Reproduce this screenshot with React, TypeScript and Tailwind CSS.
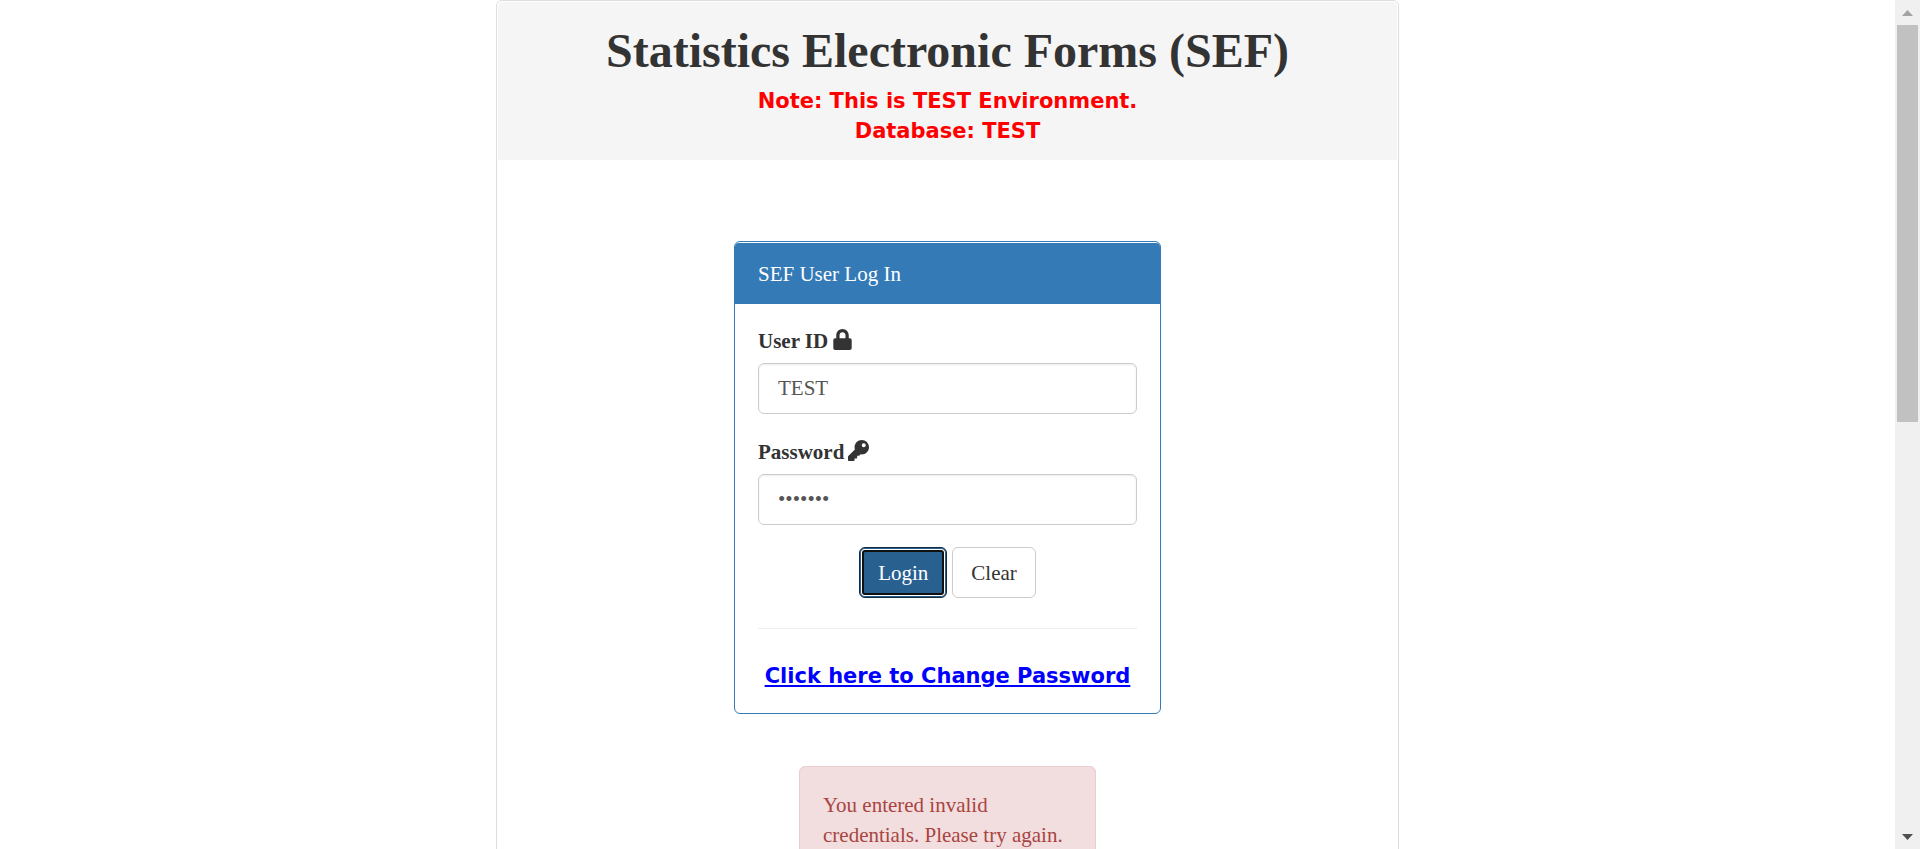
import { useState } from "react";
import { FaKey, FaLock } from "react-icons/fa";

const labelClass = "mb-[7px] flex items-center gap-1 font-bold";

const inputClass =
  "block h-[51px] w-full rounded-[6px] border border-[#cccccc] bg-white px-[19px] py-2 text-[21px] leading-[30px] text-[#555555] shadow-[inset_0_1px_2px_rgba(0,0,0,0.08)] outline-none";

function Header() {
  return (
    <header className="rounded-t-[5px] bg-[#f5f5f5] px-6 pt-[22px] pb-[14px] text-center">
      <h1 className="text-[48px] leading-[54px] font-bold text-[#333333]">
        Statistics Electronic Forms (SEF)
      </h1>
      <p className="mt-2 font-['Verdana','DejaVu_Sans',sans-serif] text-[21px] leading-[30px] font-bold text-[#ff0000]">
        Note: This is TEST Environment.
        <br />
        Database: TEST
      </p>
    </header>
  );
}

function LoginPanel() {
  const [userId, setUserId] = useState("TEST");
  const [password, setPassword] = useState("testing");

  const clear = () => {
    setUserId("");
    setPassword("");
  };

  return (
    <section className="mx-auto w-full max-w-[427px] rounded-[6px] border border-[#337ab7] bg-white pt-px">
      <h2 className="rounded-t-[4px] bg-[#337ab7] px-[23px] pt-4 pb-[15px] text-[21px] leading-[30px] text-white">
        SEF User Log In
      </h2>
      <form className="px-[23px] pt-[22px] pb-[22px]" onSubmit={(e) => e.preventDefault()}>
        <label htmlFor="user-id" className={labelClass}>
          User ID <FaLock className="mb-1 h-[21px] w-auto" aria-hidden="true" />
        </label>
        <input
          id="user-id"
          type="text"
          className={inputClass}
          value={userId}
          onChange={(e) => setUserId(e.target.value)}
        />
        <div className="mt-[23px]">
          <label htmlFor="password" className={labelClass}>
            Password <FaKey className="mb-1 h-[21px] w-auto" aria-hidden="true" />
          </label>
          <input
            id="password"
            type="password"
            className={inputClass}
            value={password}
            onChange={(e) => setPassword(e.target.value)}
          />
        </div>
        <div className="mt-[22px] flex justify-center gap-[5px]">
          <button
            type="submit"
            className="h-[51px] rounded-[6px] border border-[#122b40] bg-[#286090] px-[18px] leading-[30px] text-white shadow-[inset_0_0_0_1px_#286090,inset_0_0_0_2px_#ffffff,inset_0_0_0_4px_#101010]"
          >
            Login
          </button>
          <button
            type="button"
            onClick={clear}
            className="h-[51px] rounded-[6px] border border-[#cccccc] bg-white px-[18px] leading-[30px] text-[#333333]"
          >
            Clear
          </button>
        </div>
        <hr className="mt-[30px] mb-8 border-t border-[#eeeeee]" />
        <p className="text-center font-['Verdana','DejaVu_Sans',sans-serif] leading-[30px] font-bold whitespace-nowrap">
          <a href="#change-password" className="text-[#0000ff] underline">
            Click here to Change Password
          </a>
        </p>
      </form>
    </section>
  );
}

function ErrorMessage() {
  return (
    <section className="mx-auto mt-[30px] w-full max-w-[341px] rounded-[6px] border border-transparent bg-white p-[21px] shadow-[0_1px_1px_rgba(0,0,0,0.05)]">
      <div role="alert" className="rounded-[6px] border border-[#ebccd1] bg-[#f2dede] p-[23px] text-[#a94442]">
        You entered invalid credentials. Please try again.
      </div>
    </section>
  );
}

function ScrollTrack() {
  return (
    <div aria-hidden="true" className="flex w-[25px] shrink-0 flex-col items-center bg-[#f0f0f0]">
      <div className="flex h-[25px] items-center">
        <svg width="11" height="6" viewBox="0 0 11 6" fill="#a3a3a3">
          <path d="M5.5 0 11 6H0Z" />
        </svg>
      </div>
      <div className="h-[397px] w-[21px] bg-[#c1c1c1]" />
      <div className="mt-auto flex h-[25px] items-center">
        <svg width="11" height="6" viewBox="0 0 11 6" fill="#505050">
          <path d="M0 0H11L5.5 6Z" />
        </svg>
      </div>
    </div>
  );
}

export default function App() {
  return (
    <div className="flex h-screen overflow-hidden bg-white font-['Liberation_Serif','Times_New_Roman',serif] text-[21px] leading-[30px] text-[#333333]">
      <div className="min-w-0 flex-1">
        <main className="mx-auto w-full max-w-[903px] rounded-[6px] border border-[#dddddd] p-px shadow-[0_1px_1px_rgba(0,0,0,0.05)]">
          <Header />
          <div className="px-6 pt-[81px] pb-8">
            <LoginPanel />
            <ErrorMessage />
          </div>
        </main>
      </div>
      <ScrollTrack />
    </div>
  );
}
